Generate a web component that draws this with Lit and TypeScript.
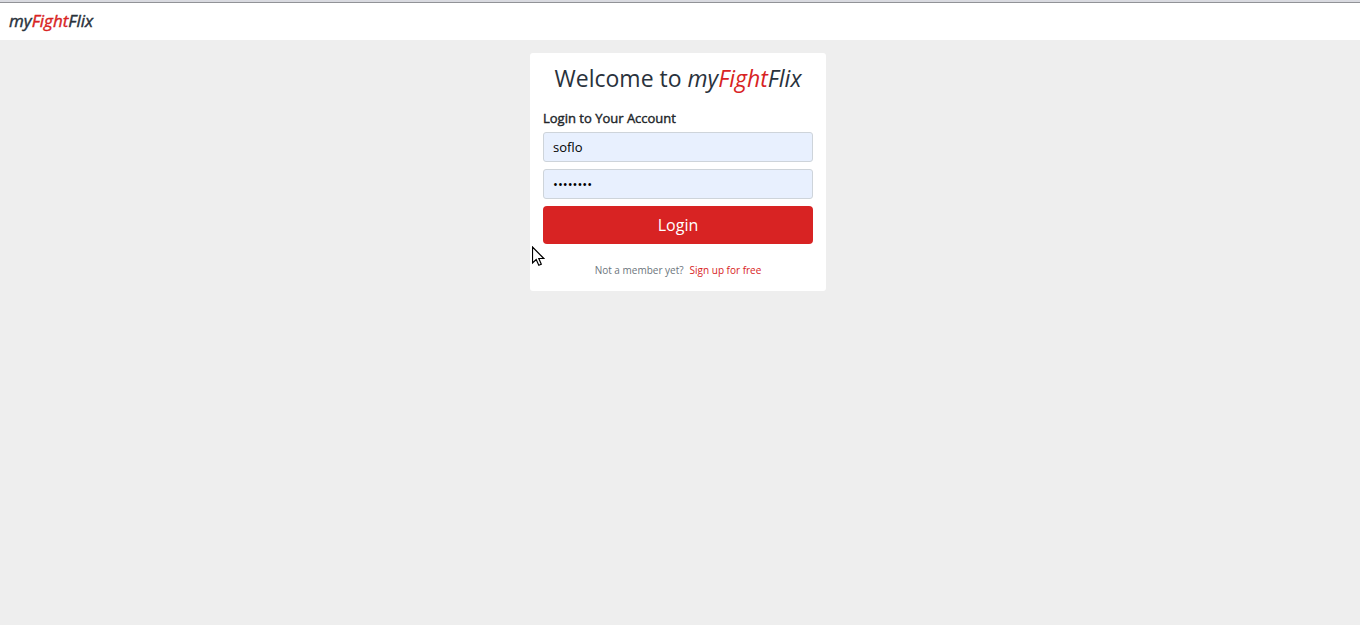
import { LitElement, html, css } from "lit";
import { customElement, state } from "lit/decorators.js";

@customElement("brand-name")
export class BrandName extends LitElement {
  static styles = css`
    :host {
      font-style: italic;
    }
    .accent {
      color: #d82323;
    }
  `;

  render() {
    return html`my<span class="accent">Fight</span>Flix`;
  }
}

@customElement("login-card")
export class LoginCard extends LitElement {
  @state() private username = "soflo";
  @state() private password = "password";

  static styles = css`
    :host {
      display: block;
      box-sizing: border-box;
      width: 296px;
      max-width: 100%;
      padding: 9px 13px 12px;
      border-radius: 3px;
      background: #fff;
    }
    h1 {
      margin: 0 0 17px;
      font-size: 23px;
      font-weight: 400;
      line-height: 32px;
      text-align: center;
    }
    form {
      display: flex;
      flex-direction: column;
      gap: 7px;
    }
    fieldset {
      display: flex;
      flex-direction: column;
      gap: 7px;
      min-width: 0;
      margin: 0;
      padding: 0;
      border: 0;
    }
    .legend {
      padding: 0;
      color: #212529;
      font-size: 13px;
      line-height: 14px;
      -webkit-text-stroke: 0.4px currentColor;
    }
    .field {
      box-sizing: border-box;
      width: 100%;
      height: 30px;
      padding: 0 9px;
      border: 1px solid #ced4da;
      border-radius: 3px;
      background: #e8f0fe;
      color: #000;
      font: inherit;
      font-size: 13px;
    }
    .submit {
      height: 38px;
      padding: 0;
      border: 0;
      border-radius: 4px;
      background: #d82323;
      color: #fff;
      font: inherit;
      font-size: 16px;
      cursor: pointer;
    }
    .signup {
      display: flex;
      justify-content: center;
      gap: 6px;
      margin: 18px 0 0;
      color: #6c757d;
      font-size: 10px;
      line-height: 17px;
    }
    .signup a {
      color: #d82323;
      text-decoration: none;
    }
  `;

  render() {
    return html`
      <h1>Welcome to <brand-name></brand-name></h1>
      <form @submit=${(e: Event) => e.preventDefault()}>
        <fieldset aria-labelledby="legend">
          <div class="legend" id="legend">Login to Your Account</div>
          <input
            class="field"
            type="text"
            aria-label="Username"
            .value=${this.username}
            @input=${(e: Event) => (this.username = (e.target as HTMLInputElement).value)}
          />
          <input
            class="field"
            type="password"
            aria-label="Password"
            .value=${this.password}
            @input=${(e: Event) => (this.password = (e.target as HTMLInputElement).value)}
          />
        </fieldset>
        <button class="submit" type="submit">Login</button>
      </form>
      <p class="signup"><span>Not a member yet?</span><a href="#signup">Sign up for free</a></p>
    `;
  }
}

@customElement("app-root")
export class AppRoot extends LitElement {
  static styles = css`
    :host {
      display: flex;
      flex-direction: column;
      min-height: 100vh;
      background: #eee;
      color: #29323c;
      font-family: "Open Sans", sans-serif;
    }
    header {
      padding: 7px 9px 8px;
      border-top: 1px solid #919297;
      background: #fff;
      font-size: 17px;
      line-height: 22px;
    }
    .edge {
      height: 2px;
      background: #d9dae0;
    }
    .brand {
      color: inherit;
      text-decoration: none;
      -webkit-text-stroke: 0.4px currentColor;
    }
    main {
      display: flex;
      justify-content: center;
      padding: 13px 4px 13px 0;
    }
    .pointer {
      position: absolute;
      left: 532px;
      top: 246px;
      width: 13px;
      height: 21px;
      pointer-events: none;
    }
  `;

  render() {
    return html`
      <div class="edge"></div>
      <header><a class="brand" href="#home"><brand-name></brand-name></a></header>
      <main><login-card></login-card></main>
      <svg class="pointer" viewBox="0 0 13 21" aria-hidden="true">
        <path
          d="M0.5 1V17L4.2 13.5L6.8 19.3L9.3 18.2L6.8 12.5H11.8Z"
          fill="#fff"
          stroke="#000"
          stroke-width="1.2"
        />
      </svg>
    `;
  }
}
